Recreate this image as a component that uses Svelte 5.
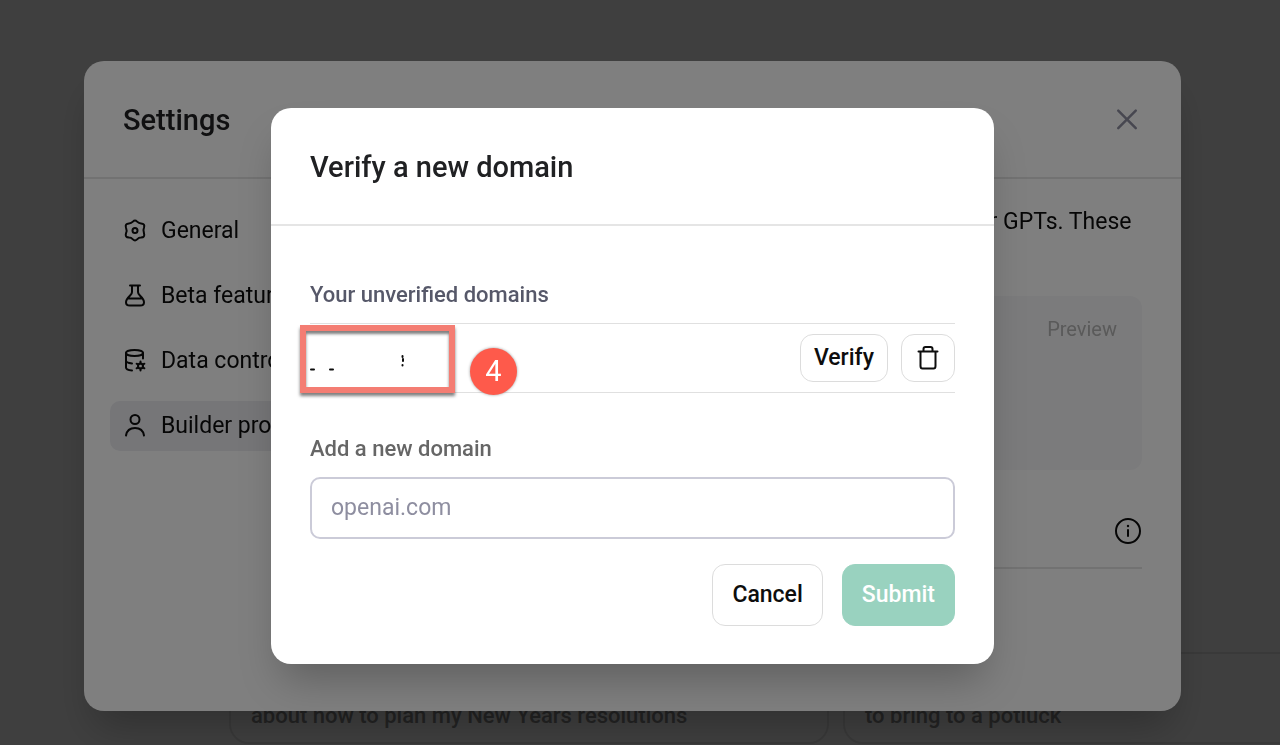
<script lang="ts">
  type NavItem = { id: string; label: string };

  const navItems: NavItem[] = [
    { id: "general", label: "General" },
    { id: "beta", label: "Beta features" },
    { id: "data", label: "Data controls" },
    { id: "builder", label: "Builder profile" },
  ];

  const suggestions = [
    { title: "Write a text", detail: "about how to plan my New Years resolutions" },
    { title: "Suggest a dish", detail: "to bring to a potluck" },
  ];

  let active = $state("builder");
  let domain = $state("");
</script>

<main class="page">
  <div class="suggestions">
    {#each suggestions as item}
      <button class="suggestion">
        <span>{item.title}</span>
        <span>{item.detail}</span>
      </button>
    {/each}
  </div>
</main>

<div class="overlay">
  <section class="dialog settings" aria-labelledby="settings-title">
    <header class="dialog-header">
      <h2 id="settings-title">Settings</h2>
      <button class="close" aria-label="Close">
        <svg width="30" height="30" viewBox="0 0 24 24">
          <path d="M5 4.500l14 14M19 4.500L5 18.500" />
        </svg>
      </button>
    </header>

    <div class="settings-body">
      <nav class="nav">
        {#each navItems as item}
          <button
            class="nav-item"
            class:active={active === item.id}
            onclick={() => (active = item.id)}
          >
            <svg width="24" height="24" viewBox="0 0 24 24" aria-hidden="true">
              {#if item.id === "general"}
                <path
                  d="M9.900 2.600Q12 .4 14.100 2.600Q15.800 4.400 18 4.400Q22.300 4.800 21 8.600Q19.800 11 21 14.400Q22.300 18.200 18 18.600Q15.800 18.600 14.100 20.400Q12 22.600 9.900 20.400Q8.200 18.600 6 18.600Q1.700 18.200 3 14.400Q4.200 11.500 3 8.600Q1.700 4.800 6 4.400Q8.200 4.400 9.900 2.600Z"
                />
                <circle cx="12" cy="11.500" r="2.500" />
              {:else if item.id === "beta"}
                <path
                  d="M7 1.500h10M9 1.500v6.500c0 1.200-.5 2-1.700 3.200C5 13.500 3 15.500 3 18.200c0 2.300 1.500 3.300 3.700 3.300h10.600c2.200 0 3.700-1 3.700-3.300 0-2.700-2-4.700-4.300-7C15.500 10 15 9.200 15 8V1.500M5 14.500h14"
                />
              {:else if item.id === "data"}
                <ellipse cx="11.500" cy="4" rx="8.500" ry="3" />
                <path
                  d="M3 4v14.500c0 1.600 2.500 2.700 6 2.900M20 4v5.500M3 11.500c0 1.500 2.500 2.600 6 2.900"
                />
                <circle cx="17.500" cy="17" r="2.500" />
                <path
                  d="M17.500 12.500v2M17.500 19.500v2M13.600 14.700l1.700 1M19.700 18.300l1.700 1M13.600 19.300l1.700-1M19.700 15.700l1.700-1"
                />
              {:else}
                <circle cx="12" cy="5.500" r="4.500" />
                <path d="M3 21.500c.8-4.900 4.300-7.500 9-7.500s8.200 2.600 9 7.500" />
              {/if}
            </svg>
            {item.label}
          </button>
        {/each}
      </nav>

      <div class="profile">
        <p>
          Personalize your builder profile to connect with users of your GPTs. These settings
          apply to publicly shared GPTs.
        </p>
        <div class="preview">Preview</div>
        <div class="info-row">
          <svg width="28" height="28" viewBox="0 0 28 28" role="img" aria-label="Info">
            <circle cx="14" cy="14" r="12" />
            <path d="M14 13v6" />
            <circle class="dot" cx="14" cy="9" r="1.200" />
          </svg>
        </div>
      </div>
    </div>
  </section>
</div>

<div class="overlay">
  <section class="dialog verify" role="dialog" aria-modal="true" aria-labelledby="verify-title">
    <header class="dialog-header">
      <h2 id="verify-title">Verify a new domain</h2>
    </header>

    <form class="verify-body" onsubmit={(e) => e.preventDefault()}>
      <h3>Your unverified domains</h3>
      <div class="domain-row">
        <div class="highlight">
          <svg width="143" height="56" viewBox="0 0 143 56" aria-hidden="true">
            <path d="M5 38.500h3M24 38.500h3M96.500 25v1M97 28v2M96.500 34v.5" />
          </svg>
        </div>
        <span class="step">4</span>
        <button type="button" class="button small">Verify</button>
        <button type="button" class="button small icon" aria-label="Delete domain">
          <svg width="28" height="28" viewBox="0 0 28 28">
            <path
              d="M4.500 7.500h19M6.500 7.500V22q0 2.500 2 2.500h11q2 0 2-2.500V7.500M9.500 7.500V5q0-2 2-2h5q2 0 2 2v2.500"
            />
          </svg>
        </button>
      </div>

      <label for="domain">Add a new domain</label>
      <input id="domain" type="text" placeholder="openai.com" bind:value={domain} />

      <div class="actions">
        <button type="button" class="button">Cancel</button>
        <button type="submit" class="button primary">Submit</button>
      </div>
    </form>
  </section>
</div>

<style>
  :global(body) {
    font-family: Roboto, "Liberation Sans", sans-serif;
    font-size: 23px;
    line-height: 32px;
    color: #0d0d0d;
    overflow: hidden;
  }

  button,
  input {
    font: inherit;
    color: inherit;
    box-sizing: border-box;
  }

  h2,
  h3,
  p {
    margin: 0;
  }

  svg {
    display: block;
    flex: none;
    fill: none;
    stroke: currentColor;
    stroke-width: 2;
    stroke-linecap: round;
    stroke-linejoin: round;
  }

  .page {
    display: flex;
    align-items: flex-end;
    min-height: 100vh;
    box-sizing: border-box;
    padding: 0 0 1px 229px;
    background: #fff;
    overflow: hidden;
  }

  .suggestions {
    display: grid;
    flex: 1;
    grid-template-columns: repeat(2, minmax(600px, 1fr));
    gap: 14px;
  }

  .suggestion {
    display: flex;
    flex-direction: column;
    padding: 17px 20px 11px;
    border: 2px solid #e5e5e5;
    border-radius: 20px;
    background: transparent;
    color: #8e8e8e;
    font-size: 22px;
    font-weight: 500;
    text-align: left;
    line-height: 30px;
  }

  .overlay {
    position: fixed;
    inset: 0;
    display: grid;
    place-items: center;
    padding: 26px 15px 0 0;
    background: rgba(0, 0, 0, 0.5);
  }

  .dialog {
    width: 100%;
    border-radius: 20px;
    background: #fff;
    box-shadow: 0 25px 40px -10px rgba(0, 0, 0, 0.25);
    overflow: hidden;
  }

  .settings {
    max-width: 1097px;
  }

  .verify {
    max-width: 723px;
  }

  .dialog-header {
    display: flex;
    align-items: center;
    justify-content: space-between;
    padding: 43px 39px 41px;
    border-bottom: 2px solid #e5e5e5;
  }

  .dialog-header h2 {
    color: #202123;
    font-size: 29px;
    font-weight: 500;
    line-height: 32px;
  }

  .close {
    padding: 0;
    border: none;
    background: none;
    color: #8e8ea0;
  }

  .settings-body {
    display: flex;
    gap: 39px;
    padding: 27px 39px 142px 26px;
  }

  .nav {
    display: flex;
    flex-direction: column;
    flex: none;
    width: 232px;
    gap: 15px;
  }

  .nav-item {
    display: flex;
    align-items: center;
    gap: 14px;
    padding: 9px 13px;
    border: none;
    border-radius: 10px;
    background: none;
    text-align: left;
    white-space: nowrap;
  }

  .nav-item.active {
    background: #ececf1;
  }

  .profile {
    flex: 1;
  }

  .preview {
    height: 142px;
    margin-top: 26px;
    padding: 17px 25px 15px;
    border-radius: 12px;
    background: #f7f7f8;
    color: #b4b4b4;
    font-size: 20px;
    text-align: right;
  }

  .info-row {
    display: flex;
    justify-content: flex-end;
    padding: 47px 0 22px;
    border-bottom: 2px solid #e5e5e5;
  }

  .dot {
    fill: currentColor;
    stroke: none;
  }

  .verify-body {
    display: flex;
    flex-direction: column;
    padding: 53px 39px 38px;
  }

  h3,
  label {
    font-size: 22px;
    font-weight: 500;
    line-height: 32px;
    color: #565869;
  }

  label {
    color: #666;
  }

  .domain-row {
    position: relative;
    display: flex;
    align-items: center;
    justify-content: flex-end;
    gap: 13px;
    margin: 12px 0 40px;
    padding: 10px 0;
    border: solid #e0e0e0;
    border-width: 1px 0;
  }

  .highlight {
    position: absolute;
    left: -10px;
    top: 1px;
    border: 6px solid #f47d73;
    box-shadow:
      0 3px 3px rgba(0, 0, 0, 0.5),
      inset 0 3px 3px rgba(0, 0, 0, 0.5);
  }

  .step {
    position: absolute;
    left: 160px;
    top: 24px;
    width: 47px;
    border-radius: 50%;
    background: #fe5a4b;
    color: #fff;
    font-size: 29px;
    line-height: 47px;
    text-align: center;
    box-shadow: 0 0 3px rgba(0, 0, 0, 0.4);
  }

  input {
    width: 100%;
    height: 62px;
    margin: 12px 0 25px;
    padding: 0 19px;
    border: 2px solid #cbcbd8;
    border-radius: 10px;
    background: #fff;
  }

  input::placeholder {
    color: #8e8ea0;
    opacity: 1;
  }

  .actions {
    display: flex;
    justify-content: flex-end;
    gap: 19px;
  }

  .button {
    height: 62px;
    padding: 0 19px;
    border: 1px solid #dcdcdc;
    border-radius: 13px;
    background: #fff;
    color: #0d0d0d;
    font-weight: 500;
  }

  .button.primary {
    border-color: #99d2bf;
    background: #99d2bf;
    color: #fff;
  }

  .button.small {
    height: 48px;
    padding: 0 13px;
  }

  .button.icon {
    padding: 0 12px;
  }
</style>
